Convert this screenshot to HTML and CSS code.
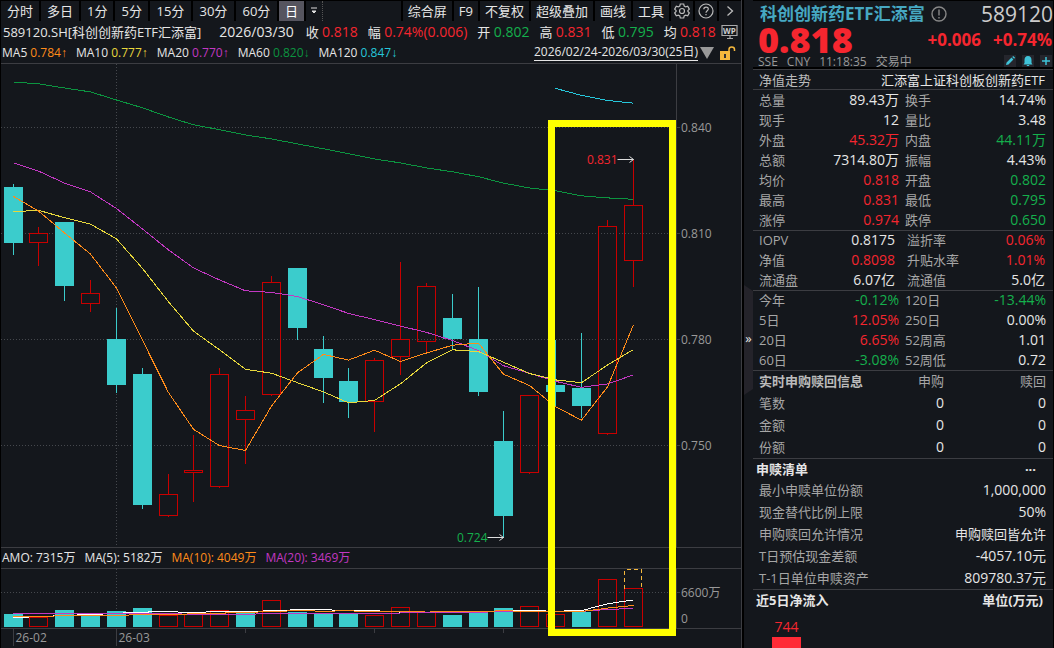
FILE: index.html
```html
<!DOCTYPE html>
<html lang="zh-CN">
<head>
    <meta charset="UTF-8">
    <meta name="viewport" content="width=device-width, initial-scale=1">
    <title>589120.SH 科创创新药ETF汇添富</title>
    <link rel="stylesheet" href="styles.css">
</head>
<body>
<div class="wrapper">
    <main class="main">
        <div class="toolbar">
            <div class="periods">
                <button>分时</button>
                <button>多日</button>
                <button>1分</button>
                <button>5分</button>
                <button class="wide">15分</button>
                <button class="wide">30分</button>
                <button class="wide">60分</button>
                <button class="active">日</button>
                <button class="more" aria-label="更多周期"><svg width="8" height="8" viewBox="0 0 8 8"><path d="M1 1h6M2 4h4L4 6z" fill="#ddd" stroke="#ddd" stroke-width="1"/></svg></button>
            </div>
            <div class="tools">
                <button>综合屏</button>
                <button>F9</button>
                <button>不复权</button>
                <button>超级叠加</button>
                <button>画线</button>
                <button>工具</button>
                <button class="icon" aria-label="设置"><svg width="16" height="16" viewBox="0 0 16 16" fill="none" stroke="#bbb" stroke-width="1.2"><path d="M6.300 1h3.400l.5 2 1.500.9 2-.6 1.600 2.800L13.900 7.500v1l1.400 1.400-1.600 2.800-2-.6-1.500.9-.5 2H6.300l-.5-2-1.500-.9-2 .6L.7 9.900 2.100 8.500v-1L.7 6.100l1.600-2.800 2 .6 1.500-.9z"/><circle cx="8" cy="8" r="2.500"/></svg></button>
                <button class="icon" aria-label="帮助"><svg width="16" height="16" viewBox="0 0 16 16" fill="none" stroke="#bbb" stroke-width="1.2"><circle cx="8" cy="8" r="7"/><path d="M5.800 6.300C5.800 3.300 10.300 3.400 10.300 6.100 10.300 7.700 8 7.800 8 9.700M8 11v1.300"/></svg></button>
                <button class="icon" aria-label="展开"><svg width="16" height="16" viewBox="0 0 16 16" fill="none" stroke="#bbb" stroke-width="1.3"><path d="M5.500 3.500l5 4.500-5 4.500"/></svg></button>
            </div>
        </div>

        <div class="quote">
            <span class="name">589120.SH[科创创新药ETF汇添富]</span>
            <span class="date">2026/03/30</span>
            <span>收 <b class="up">0.818</b></span>
            <span>幅 <b class="up">0.74%(0.006)</b></span>
            <span>开 <b class="down">0.802</b></span>
            <span>高 <b class="up">0.831</b></span>
            <span>低 <b class="down">0.795</b></span>
            <span>均 <b class="up">0.818</b></span>
            <svg class="wp" width="18" height="16" viewBox="0 0 18 16"><path d="M1 1.500h15v10H1zM6 14.500h6M9 12v2" fill="none" stroke="#aaa" stroke-width="1.200"/><text x="8.500" y="9.500" text-anchor="middle" font-size="8" font-weight="700" fill="#ccc">WP</text></svg>
        </div>

        <div class="averages">
            <span>MA5 <b class="ma5">0.784↑</b></span>
            <span>MA10 <b class="ma10">0.777↑</b></span>
            <span>MA20 <b class="ma20">0.770↑</b></span>
            <span>MA60 <b class="ma60">0.820↓</b></span>
            <span>MA120 <b class="ma120">0.847↓</b></span>
            <a class="range" href="#">2026/02/24-2026/03/30(25日)</a>
            <svg class="arrow" width="14" height="12" viewBox="0 0 14 12"><path d="M0 0h14L7 12z" fill="#999"/></svg>
            <svg class="lock" width="16" height="14" viewBox="0 0 16 14"><path d="M0 5h10v9H0z" fill="#f5b83d"/><path d="M9 5V3.500C9 .2 14.500.2 14.500 3.500V5" fill="none" stroke="#f5b83d" stroke-width="1.500"/><path d="M4 8h2v4H4z" fill="#333"/></svg>
        </div>

        <div class="chart">
            <svg class="pricePane" id="price"></svg>
            <div class="legend">
                <span>AMO: 7315万</span>
                <span>MA(5): 5182万</span>
                <span class="ma5">MA(10): 4049万</span>
                <span class="ma20">MA(20): 3469万</span>
            </div>
            <svg class="volumePane" id="volume"></svg>
            <svg class="dates" id="dates"></svg>
            <div class="mark"></div>
        </div>
    </main>

    <button class="fold" aria-label="收起侧栏"><span>»</span></button>

    <aside class="side">
        <header class="head">
            <div class="title">
                <h1>科创创新药ETF汇添富</h1>
                <svg width="16" height="16" viewBox="0 0 16 16" fill="none" stroke="#888" stroke-width="1.400"><circle cx="8" cy="8" r="7"/><path d="M8 3.500v6M8 11v1.500"/></svg>
                <span class="code">589120</span>
            </div>
            <div class="last up">
                <strong>0.818</strong>
                <span>+0.006</span>
                <span>+0.74%</span>
            </div>
            <div class="status">
                <span>SSE</span>
                <span>CNY</span>
                <span>11:18:35</span>
                <span>交易中</span>
                <div class="acts">
                    <button aria-label="编辑"><svg width="12" height="12" viewBox="0 0 12 12"><path d="M2 10l.6-2.500L7.500 2.600l1.900 1.900L4.500 9.400zM8.200 1.900l1-1 1.900 1.900-1 1z" fill="#3fc3d8"/></svg></button>
                    <button aria-label="提醒"><svg width="12" height="12" viewBox="0 0 12 12"><path d="M6 1c2.500 0 3.500 1.800 3.500 4v3l1 1.500h-9l1-1.500V5C2.500 2.800 3.500 1 6 1zM4.800 10h2.400v1H4.800z" fill="#3fc3d8"/></svg></button>
                    <button aria-label="添加"><svg width="12" height="12" viewBox="0 0 12 12"><path d="M6 2v8M2 6h8" stroke="#3fc3d8" stroke-width="1.500"/></svg></button>
                </div>
            </div>
        </header>

        <div class="fund">
            <span>净值走势</span>
            <span>汇添富上证科创板创新药ETF</span>
        </div>

        <table class="info">
            <tr><th>总量</th><td>89.43万</td><th>换手</th><td>14.74%</td></tr>
            <tr><th>现手</th><td>12</td><th>量比</th><td>3.48</td></tr>
            <tr><th>外盘</th><td class="up">45.32万</td><th>内盘</th><td class="down">44.11万</td></tr>
            <tr><th>总额</th><td>7314.80万</td><th>振幅</th><td>4.43%</td></tr>
            <tr><th>均价</th><td class="up">0.818</td><th>开盘</th><td class="down">0.802</td></tr>
            <tr><th>最高</th><td class="up">0.831</td><th>最低</th><td class="down">0.795</td></tr>
            <tr><th>涨停</th><td class="up">0.974</td><th>跌停</th><td class="down">0.650</td></tr>
        </table>

        <table class="info nav">
            <tr><th>IOPV</th><td>0.8175</td><th>溢折率</th><td class="up">0.06%</td></tr>
            <tr><th>净值</th><td class="up">0.8098</td><th>升贴水率</th><td class="up">1.01%</td></tr>
            <tr><th>流通盘</th><td>6.07亿</td><th>流通值</th><td>5.0亿</td></tr>
        </table>

        <table class="info">
            <tr><th>今年</th><td class="down">-0.12%</td><th>120日</th><td class="down">-13.44%</td></tr>
            <tr><th>5日</th><td class="up">12.05%</td><th>250日</th><td>0.00%</td></tr>
            <tr><th>20日</th><td class="up">6.65%</td><th>52周高</th><td>1.01</td></tr>
            <tr><th>60日</th><td class="down">-3.08%</td><th>52周低</th><td>0.72</td></tr>
        </table>

        <table class="apply">
            <tr><th class="strong">实时申购赎回信息</th><th>申购</th><th>赎回</th></tr>
            <tr><th>笔数</th><td>0</td><td>0</td></tr>
            <tr><th>金额</th><td>0</td><td>0</td></tr>
            <tr><th>份额</th><td>0</td><td>0</td></tr>
        </table>

        <section class="list">
            <h2><span>申赎清单</span><button aria-label="更多">···</button></h2>
            <table>
                <tr><th>最小申赎单位份额</th><td>1,000,000</td></tr>
                <tr><th>现金替代比例上限</th><td>50%</td></tr>
                <tr><th>申购赎回允许情况</th><td class="text">申购赎回皆允许</td></tr>
                <tr><th>T日预估现金差额</th><td>-4057.10元</td></tr>
                <tr><th>T-1日单位申赎资产</th><td>809780.37元</td></tr>
            </table>
        </section>

        <section class="flow">
            <h2><span>近5日净流入</span><span>单位(万元)</span></h2>
            <div class="flowBar">
                <span class="up">744</span>
                <i></i>
            </div>
        </section>
    </aside>
</div>
<script src="script.js"></script>
</body>
</html>
```
FILE: styles.css
```css
*{
    box-sizing: border-box;
    margin: 0;
    padding: 0;
}
body{
    background-color: #000;
    color: #e6e6e6;
    font-family: "Open Sans", "Noto Sans CJK SC", sans-serif;
    font-size: 13px;
    line-height: 20px;
}
button{
    border: 0;
    background: none;
    color: inherit;
    font: inherit;
    cursor: pointer;
}
svg{
    display: block;
    flex-shrink: 0;
}
b{
    font-weight: 400;
}
table{
    width: 100%;
    border-collapse: separate;
    border-spacing: 0;
    table-layout: fixed;
}
.up{
    color: #f5262f;
}
.down{
    color: #14b04c;
}
.ma5{
    color: #ff8c1a;
}
.ma10{
    color: #e8d83c;
}
.ma20{
    color: #c238c2;
}
.ma60{
    color: #0c9440;
}
.ma120{
    color: #26c6da;
}
.wrapper{
    display: flex;
    height: 100vh;
    overflow: hidden;
    white-space: nowrap;
}

/* left part */
.main{
    display: flex;
    flex: 1;
    flex-direction: column;
    min-width: 0;
    background-color: #14171c;
    border-left: 1px solid #000;
    border-right: 1px solid #3c3d42;
}
.toolbar{
    display: flex;
    justify-content: space-between;
    height: 21px;
    border-top: 1px solid #000;
}
.periods,
.tools{
    display: flex;
}
.toolbar button{
    display: flex;
    align-items: center;
    justify-content: center;
    padding: 0 6px;
    border-right: 2px solid #000;
}
.toolbar .wide{
    min-width: 43px;
}
.tools button{
    padding: 0 5px;
}
.tools button:first-child{
    border-left: 2px solid #000;
}
.toolbar .active{
    background-color: #56555f;
    color: #fff;
}
.toolbar .more{
    padding: 0 4px;
    border-right: 1px dotted #555;
}
.tools .icon{
    padding: 0 3px;
}
.tools .icon:last-child{
    border-right: 0;
}
.quote{
    display: flex;
    align-items: center;
    height: 21px;
    padding: 0 2px;
}
.quote span{
    margin-right: 10px;
}
.quote b,
.quote .date{
    font-size: 14px;
}
.quote .name{
    margin-right: 18px;
}
.quote .date{
    margin-right: 12px;
}
.quote span:last-of-type{
    margin-right: 0;
}
.quote .wp{
    margin-left: auto;
}
.averages{
    display: flex;
    align-items: center;
    height: 21px;
    padding: 0 5px 0 1px;
    font-size: 12px;
}
.averages span{
    margin-right: 9px;
}
.averages b{
    font-family: "Open Sans", "Liberation Sans", sans-serif;
}
.range{
    margin-left: auto;
    color: #e6e6e6;
    line-height: 16px;
    text-decoration: none;
    border-bottom: 1px solid #e6e6e6;
}
.arrow{
    margin: 0 6px 0 2px;
}
.chart{
    position: relative;
    display: flex;
    flex: 1;
    flex-direction: column;
    min-height: 0;
    border-top: 1px solid #3c3d42;
    font-size: 12px;
}
.pricePane{
    flex: 1;
    width: 100%;
    min-height: 0;
}
.legend{
    display: flex;
    gap: 9px;
    height: 22px;
    padding-left: 1px;
    border-top: 1px solid #3c3d42;
    border-bottom: 1px solid #3c3d42;
}
.volumePane{
    width: 100%;
    height: 59px;
}
.dates{
    width: 100%;
    height: 20px;
}
.mark{
    position: absolute;
    top: 56px;
    right: 65px;
    bottom: 12px;
    width: 128px;
    border: 7px solid #ff0;
}

/* chart shapes */
.grid{
    stroke: #45484d;
    stroke-dasharray: 1 2;
}
.axis{
    stroke: #3c3d42;
}
.grid,
.axis,
.rise,
.fall,
.forecast,
.line{
    shape-rendering: crispEdges;
}
.rise{
    fill: none;
    stroke: #c80000;
}
.fall{
    fill: #3bcccc;
    stroke: #3bcccc;
}
.forecast{
    fill: none;
    stroke: #f5b83d;
    stroke-dasharray: 4 3;
}
.line{
    fill: none;
    stroke: currentColor;
}
.amount{
    color: #fff;
}
.label{
    fill: #999;
}
.high{
    fill: #f5262f;
}
.low{
    fill: #14b04c;
}
.pointer{
    fill: none;
    stroke: #ddd;
}

/* fold strip */
.fold{
    display: flex;
    align-items: center;
    width: 11px;
    padding: 32px 0 0;
    border-left: 2px solid #000;
    background-color: #14171c;
}
.fold span{
    width: 9px;
    height: 110px;
    background-color: #24232a;
    clip-path: polygon(0 0, 100% 6px, 100% 104px, 0 100%);
    line-height: 106px;
}

/* right part */
.side{
    width: 301px;
    overflow: hidden;
    background-color: #14171c;
    border-top: 1px solid #000;
    border-right: 1px solid #000;
}
.head{
    height: 68px;
    border-bottom: 2px solid #000;
}
.title{
    display: flex;
    align-items: center;
    gap: 6px;
    height: 26px;
    padding-left: 7px;
}
.title h1{
    color: #46a8c2;
    font-size: 17px;
}
.code{
    margin-left: auto;
    color: #ccc;
    font-size: 21px;
}
.last{
    display: flex;
    gap: 12px;
    height: 26px;
    padding: 0 1px 0 5px;
    font-size: 17px;
    font-weight: 700;
    line-height: 26px;
}
.last strong{
    margin-right: auto;
    font-size: 36px;
}
.status{
    display: flex;
    gap: 9px;
    height: 14px;
    padding: 0 1px 0 5px;
    color: #999;
    font-size: 12px;
    line-height: 18px;
}
.acts{
    display: flex;
    gap: 6px;
    margin-left: auto;
    padding-top: 2px;
}
.acts button{
    height: 12px;
    background-color: #25262d;
}
.fund{
    display: flex;
    justify-content: space-between;
    height: 21px;
    padding: 0 8px 0 6px;
    border-top: 1px solid #3c3d42;
    border-bottom: 1px solid #3c3d42;
}
.fund span:first-child{
    color: #bbb;
}
.side th{
    color: #a6a6a6;
    font-weight: 400;
    text-align: left;
}
.side td{
    font-size: 14px;
    text-align: right;
}
/* the rule under a block lies on the first row of the next one */
.info,
.apply,
.list{
    margin-bottom: -1px;
    border-bottom: 1px solid #3c3d42;
}
.info th{
    width: 60px;
    padding-left: 6px;
}
.info th,
.info td{
    height: 20px;
}
.info td:nth-child(2){
    width: 86px;
}
.info td:last-child{
    padding-right: 7px;
}
.nav th:nth-child(3){
    padding-left: 8px;
}
.nav td:nth-child(2){
    padding-right: 4px;
}
.nav td:last-child{
    padding-right: 8px;
}
.apply th,
.apply td,
.list th,
.list td{
    height: 22px;
    padding: 0 7px 0 6px;
}
.apply th:first-child{
    width: 145px;
}
.apply th + th{
    text-align: right;
}
.apply th:nth-child(2),
.apply td:nth-child(2){
    width: 46px;
    padding: 0;
}
.side .strong{
    color: #bbb;
    font-weight: 700;
}
.side h2{
    display: flex;
    justify-content: space-between;
    height: 21px;
    padding: 0 10px 0 3px;
    font-size: 13px;
    line-height: 22px;
}
.list h2 button{
    padding-right: 7px;
}
.side .text{
    font-size: 13px;
}
.flowBar{
    display: flex;
    flex-direction: column;
    align-items: center;
    width: 29px;
    margin: 7px 0 0 19px;
    font-size: 14px;
}
.flowBar i{
    width: 100%;
    height: 40px;
    background-color: #ff2a36;
}
```
FILE: script.js
```js
// open, close, high, low, amount
var days = [
    [0.823, 0.807, 0.824, 0.804, 2430],
    [0.807, 0.810, 0.812, 0.801, 1860],
    [0.813, 0.795, 0.813, 0.791, 3200],
    [0.790, 0.793, 0.797, 0.788, 2180],
    [0.780, 0.767, 0.789, 0.765, 3010],
    [0.770, 0.733, 0.772, 0.732, 3580],
    [0.730, 0.736, 0.742, 0.730, 2240],
    [0.742, 0.743, 0.753, 0.734, 2430],
    [0.738, 0.770, 0.772, 0.738, 3140],
    [0.757, 0.760, 0.764, 0.745, 2500],
    [0.764, 0.796, 0.798, 0.764, 5060],
    [0.800, 0.783, 0.800, 0.780, 2880],
    [0.777, 0.769, 0.781, 0.762, 2500],
    [0.768, 0.762, 0.772, 0.758, 2560],
    [0.762, 0.774, 0.775, 0.754, 2180],
    [0.775, 0.780, 0.802, 0.770, 3710],
    [0.779, 0.795, 0.796, 0.776, 2880],
    [0.786, 0.780, 0.793, 0.777, 2240],
    [0.780, 0.765, 0.795, 0.764, 2560],
    [0.751, 0.730, 0.760, 0.724, 3580],
    [0.742, 0.764, 0.764, 0.742, 3900],
    [0.767, 0.765, 0.780, 0.761, 2430],
    [0.766, 0.761, 0.782, 0.758, 2820],
    [0.753, 0.812, 0.814, 0.753, 9090],
    [0.802, 0.818, 0.831, 0.795, 7315]
];
// the 19 days before the first candle, for the averages
var oldClose = [0.856, 0.863, 0.843, 0.861, 0.849, 0.854, 0.845, 0.838, 0.822, 0.805,
    0.806, 0.816, 0.811, 0.809, 0.8165, 0.8305, 0.826, 0.823, 0.815];
var oldAmount = [3140, 3140, 3140, 3140, 3140, 3140, 3140, 3140, 3140, 3140,
    2170, 2170, 2170, 2170, 2170, 1630, 1630, 1630, 1630];
var ma60 = [0.8527, 0.8522, 0.8510, 0.8499, 0.8476, 0.8454, 0.8428, 0.8406, 0.8392, 0.8377,
    0.8366, 0.8352, 0.8338, 0.8324, 0.8309, 0.8298, 0.8284, 0.8273, 0.8259, 0.8241,
    0.8227, 0.8219, 0.8205, 0.8199, 0.8195];
var ma120 = [0.8509, 0.8489, 0.8475, 0.8467];
var axisWidth = 66;
var monthStart = 4;

function average(old, list, n){
    var all = old.concat(list);
    return list.map(function(_, i){
        var end = old.length + i + 1;
        var part = all.slice(end - n, end);
        return part.reduce(function(a, b){ return a + b; }, 0) / n;
    });
}

function rect(cls, x, y, w, h){
    return '<rect class="' + cls + '" x="' + x + '" y="' + y + '" width="' + w + '" height="' + h + '"/>';
}

function path(cls, d){
    return '<path class="' + cls + '" d="' + d + '"/>';
}

function text(cls, x, y, str, anchor){
    return '<text class="' + cls + '" x="' + x + '" y="' + y + '" text-anchor="' + (anchor || 'start') + '">' + str + '</text>';
}

function line(cls, values, start, getX, getY){
    return path('line ' + cls, values.map(function(v, i){
        return (i ? 'L' : 'M') + getX(i + start) + ' ' + getY(v).toFixed(1);
    }).join(''));
}

function draw(){
    var price = document.getElementById('price');
    var volume = document.getElementById('volume');
    var dates = document.getElementById('dates');
    var box = price.getBoundingClientRect();
    var plot = Math.round(box.width) - axisWidth + 1;
    var step = (plot - 55) / 24;
    var closes = days.map(function(d){ return d[1]; });
    var amounts = days.map(function(d){ return d[4]; });

    function getX(i){
        return Math.floor(12 + step * i + 0.01) + 0.5;
    }

    // price pane
    var top = 0.8578, bottom = 0.7211;
    function getY(p){
        return (top - p) / (top - bottom) * box.height;
    }
    function snap(p){
        return Math.round(getY(p)) + 0.5;
    }
    var out = '';
    [0.840, 0.810, 0.780, 0.750].forEach(function(p){
        out += path('grid', 'M0 ' + snap(p) + 'H' + plot);
        out += path('axis', 'M' + plot + ' ' + snap(p) + 'h4');
        out += text('label', plot + 5, snap(p) + 4, p.toFixed(3));
    });
    out += path('grid', 'M' + getX(monthStart) + ' 0V' + box.height);
    out += path('axis', 'M' + (plot + 0.5) + ' 0V' + box.height);
    days.forEach(function(d, i){
        var x = getX(i);
        var cls = d[1] > d[0] ? 'rise' : 'fall';
        var y1 = snap(Math.max(d[0], d[1]));
        var y2 = snap(Math.min(d[0], d[1])) - 1;
        out += path(cls, 'M' + x + ' ' + snap(d[2]) + 'V' + y1 + 'M' + x + ' ' + y2 + 'V' + snap(d[3]));
        out += rect(cls, x - 9, y1, 18, y2 - y1);
    });
    out += line('ma60', ma60, 0, getX, getY);
    out += line('ma120', ma120, 21, getX, getY);
    out += line('ma20', average(oldClose, closes, 20), 0, getX, getY);
    out += line('ma10', average(oldClose, closes, 10), 0, getX, getY);
    out += line('ma5', average(oldClose, closes, 5), 0, getX, getY);
    [[24, 0.831, 'high'], [19, 0.724, 'low']].forEach(function(m){
        var x = getX(m[0]), y = snap(m[1]);
        out += text(m[2], x - 16, y + 4, m[1], 'end');
        out += path('pointer', 'M' + (x - 16) + ' ' + y + 'h16m-4 -3l4 3l-4 3');
    });
    price.innerHTML = out;

    // amount pane, coloured by the change from the day before
    var base = 57.5;
    function getV(v){
        return base - v / 192;
    }
    out = path('grid', 'M0 23.5H' + plot);
    out += path('grid', 'M' + getX(monthStart) + ' 0V59');
    out += path('axis', 'M' + (plot + 0.5) + ' 0V59M' + plot + ' 23.5h4');
    amounts.forEach(function(v, i){
        var y = Math.round(getV(v)) + 0.5;
        var before = i ? closes[i - 1] : oldClose[oldClose.length - 1];
        var up = closes[i] > before;
        out += rect(up ? 'rise' : 'fall', getX(i) - 9, y, 18, base - y);
    });
    out += path('forecast', 'M' + (getX(24) - 9) + ' 19.5V0.5h17V19.5');
    out += '<g class="amount">' + line('', average(oldAmount, amounts, 5), 0, getX, getV) + '</g>';
    out += line('ma20', average(oldAmount, amounts, 20), 0, getX, getV);
    out += line('ma5', average(oldAmount, amounts, 10), 0, getX, getV);
    out += text('label', plot + 5, 28, '6600万') + text('label', plot + 5, 54, '0');
    volume.innerHTML = out;

    // date axis
    out = path('axis', 'M0 0.5H' + box.width);
    [0, monthStart].forEach(function(i, n){
        out += path('axis', 'M' + getX(i) + ' 0v18');
        out += text('label', getX(i) + 2, 14, n ? '26-03' : '26-02');
    });
    [9, 14, 19].forEach(function(i){
        out += path('axis', 'M' + getX(i) + ' 0v5');
    });
    dates.innerHTML = out;
}

draw();
window.onresize = draw;
```
